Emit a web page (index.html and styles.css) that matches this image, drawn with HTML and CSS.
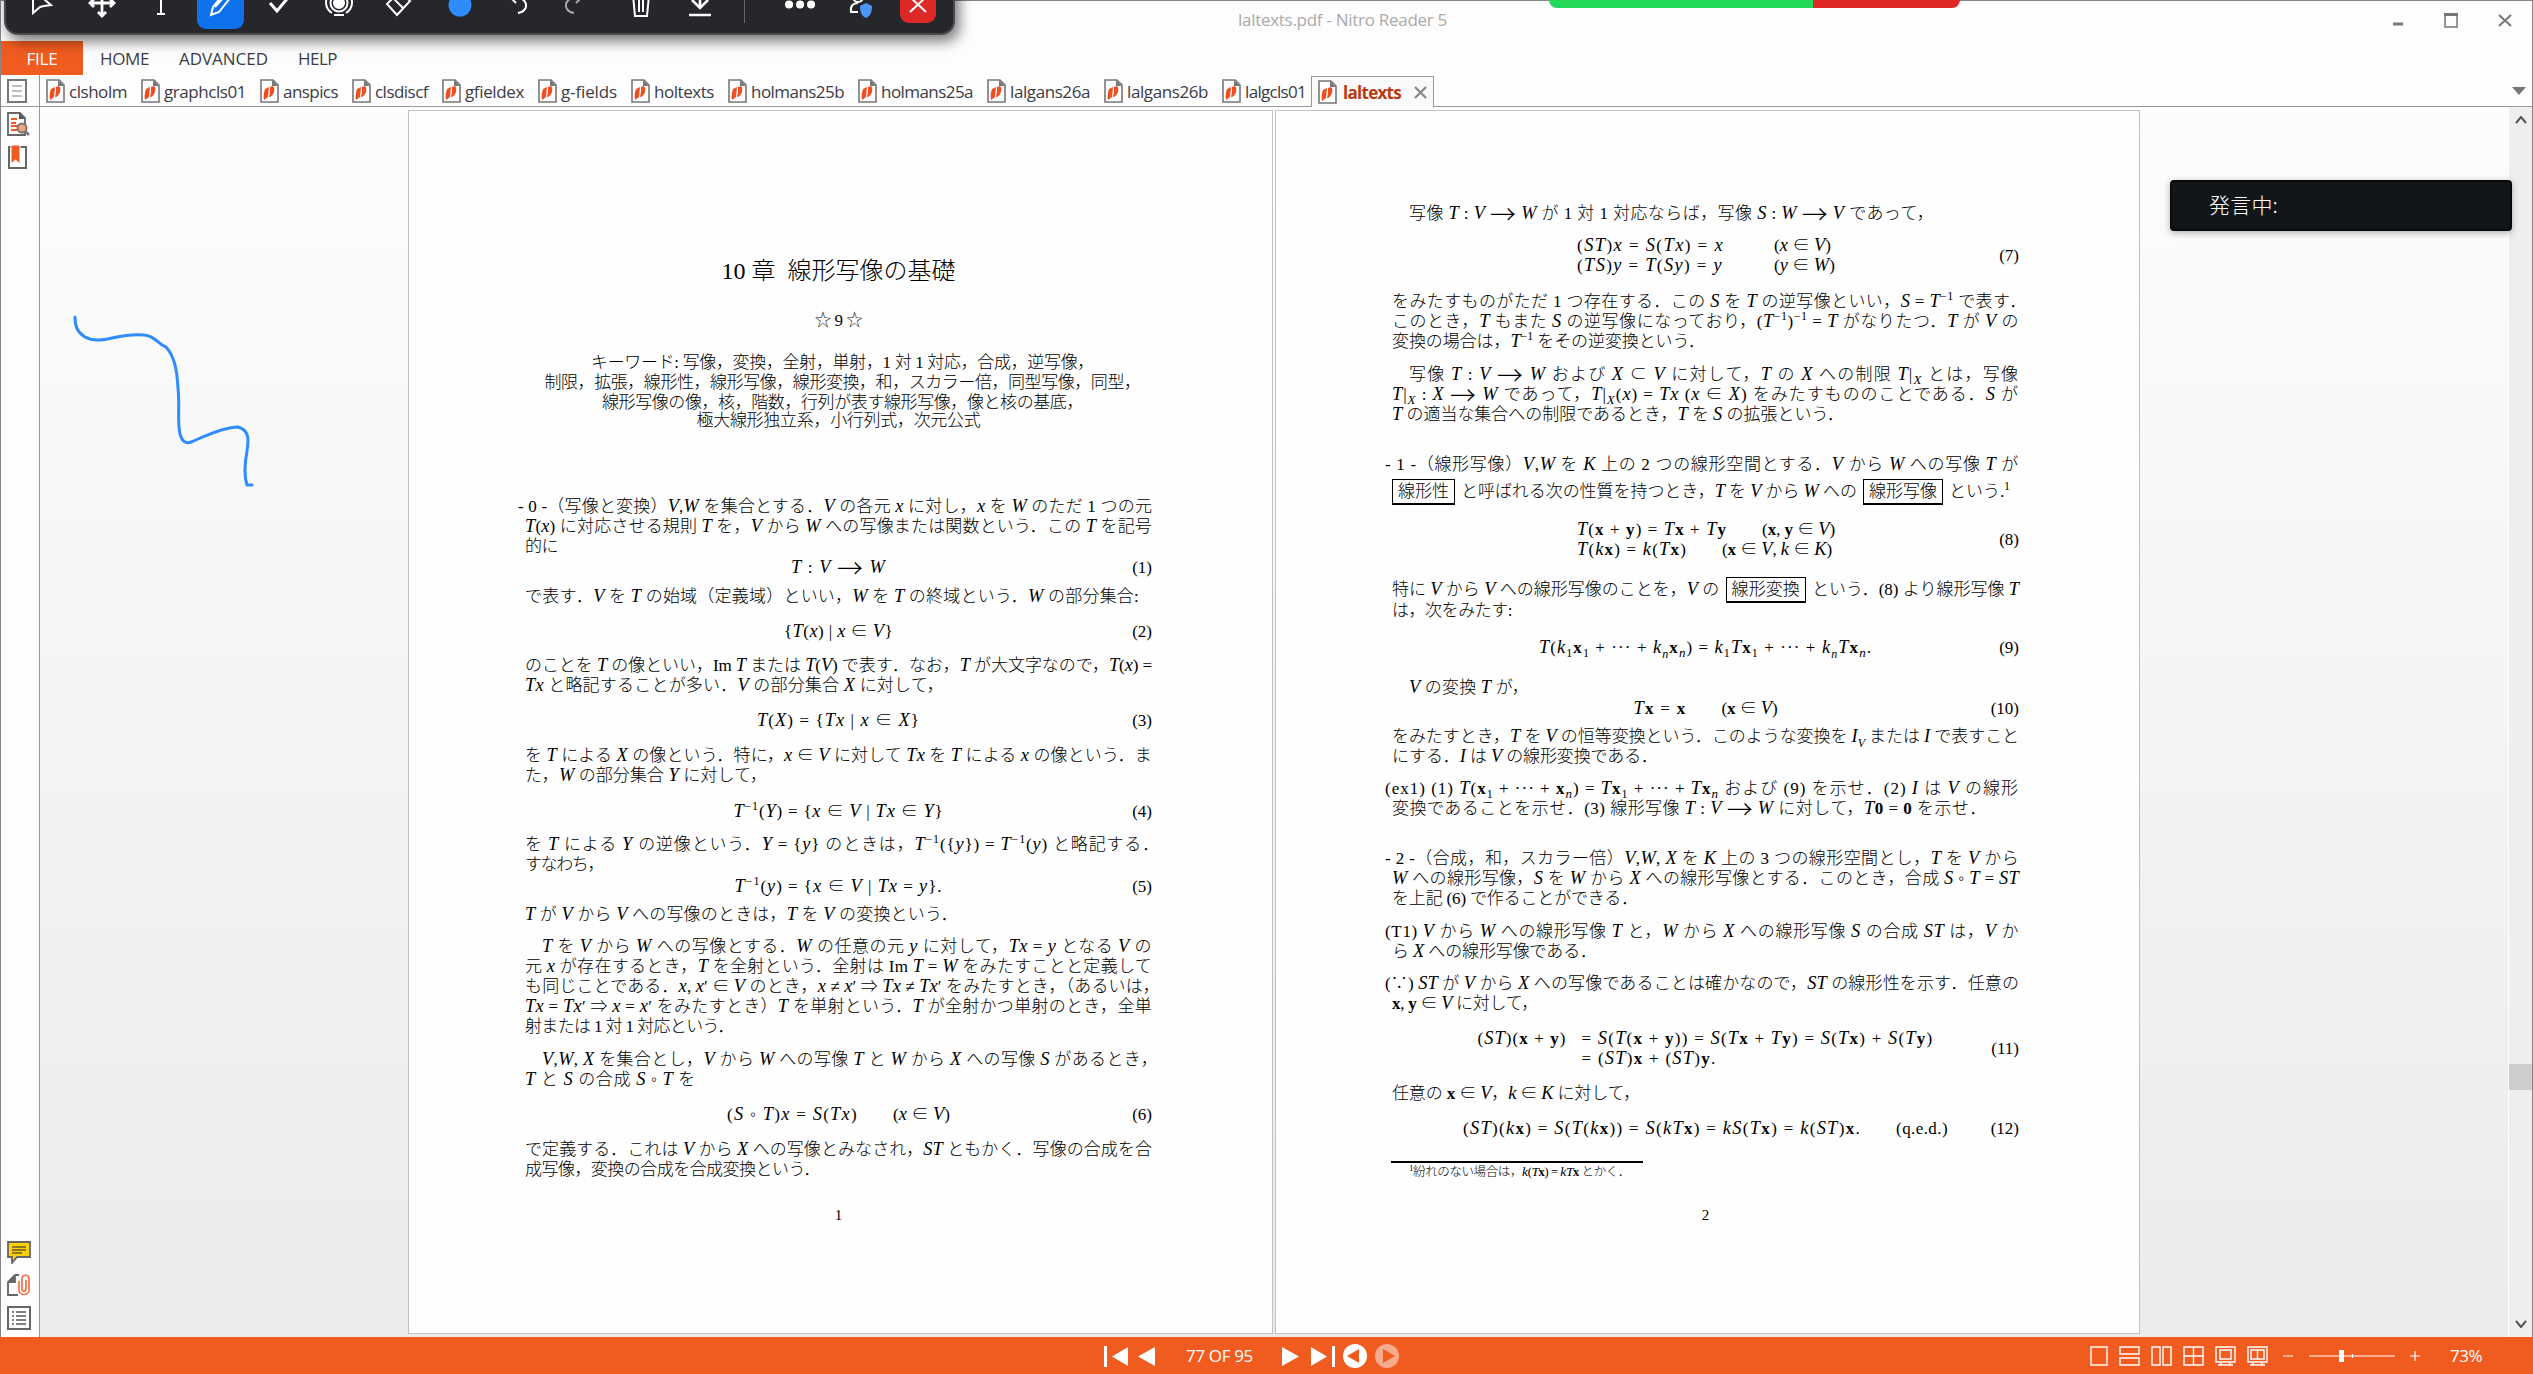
FILE: index.html
```html
<!DOCTYPE html>
<html lang="ja">
<head>
<meta charset="UTF-8">
<title>laltexts.pdf - Nitro Reader 5</title>
<link rel="stylesheet" href="styles.css">
</head>
<body>
<svg class="defs">
    <symbol id="pdf" viewBox="0 0 19 24">
        <path d="M1 1H13L18 6V23H1Z" fill="#fff" stroke="#777" stroke-width="1.6"/>
        <path d="M12 1V7H18Z" fill="#777"/>
        <path d="M5 10L9 8L8 18L4 21C3 17 4 13 5 10ZM10 8C14 6 15 9 14 13C13 16 11 18 9 18L10 13Z" fill="#f04e1f"/>
    </symbol>
</svg>

<div class="window">
    <div class="titlebar">
        <span class="title" data-w="209">laltexts.pdf - Nitro Reader 5</span>
        <div class="controls">
            <svg width="12" height="24"><path d="M1 16H11" stroke="#777" stroke-width="3"/></svg>
            <svg width="14" height="24"><path d="M1 6V19H13V6" fill="none" stroke="#777" stroke-width="1.5"/><path d="M0 6.500H14" stroke="#777" stroke-width="3"/></svg>
            <svg width="14" height="24"><path d="M1 7L13 18M13 7L1 18" stroke="#777" stroke-width="2"/></svg>
        </div>
    </div>

    <div class="menu">
        <div class="file"><span data-w="31">FILE</span></div>
        <span data-w="49">HOME</span>
        <span data-w="89">ADVANCED</span>
        <span data-w="39">HELP</span>
    </div>

    <div class="tabs">
        <div class="tab"><svg><use href="#pdf"/></svg><span data-w="58">clsholm</span></div>
        <div class="tab"><svg><use href="#pdf"/></svg><span data-w="82">graphcls01</span></div>
        <div class="tab"><svg><use href="#pdf"/></svg><span data-w="55">anspics</span></div>
        <div class="tab"><svg><use href="#pdf"/></svg><span data-w="53">clsdiscf</span></div>
        <div class="tab"><svg><use href="#pdf"/></svg><span data-w="59">gfieldex</span></div>
        <div class="tab"><svg><use href="#pdf"/></svg><span data-w="56">g-fields</span></div>
        <div class="tab"><svg><use href="#pdf"/></svg><span data-w="60">holtexts</span></div>
        <div class="tab"><svg><use href="#pdf"/></svg><span data-w="93">holmans25b</span></div>
        <div class="tab"><svg><use href="#pdf"/></svg><span data-w="92">holmans25a</span></div>
        <div class="tab"><svg><use href="#pdf"/></svg><span data-w="80">lalgans26a</span></div>
        <div class="tab"><svg><use href="#pdf"/></svg><span data-w="81">lalgans26b</span></div>
        <div class="tab"><svg><use href="#pdf"/></svg><span data-w="61">lalgcls01</span></div>
        <div class="tab active"><svg><use href="#pdf"/></svg><span data-w="58">laltexts</span>
            <svg class="close" viewBox="0 0 14 14"><path d="M1 1L13 13M13 1L1 13" stroke="#888" stroke-width="2.400"/></svg>
        </div>
        <div class="more"></div>
    </div>

    <div class="main">
        <div class="rail">
            <svg width="20" height="24"><rect x="1" y="1" width="18" height="22" fill="#fff" stroke="#777" stroke-width="2"/><path d="M5 7H15M5 12H15M5 17H15" stroke="#aaa" stroke-width="1.500"/></svg>
            <svg width="23" height="24"><path d="M1 1H13L18 6V23H1Z" fill="#fff" stroke="#666" stroke-width="1.800"/><path d="M12 1V7H18Z" fill="#555"/><path d="M4 7H10M4 11H9M4 14H12M4 18H10" stroke="#f05b20" stroke-width="1.800"/><circle cx="15" cy="16" r="4.500" fill="#f7a283" stroke="#777" stroke-width="2"/><path d="M18 19L22 23" stroke="#777" stroke-width="2.500"/></svg>
            <svg width="20" height="24"><rect x="2" y="2" width="17" height="21" fill="#fff" stroke="#666" stroke-width="2"/><path d="M4 0H13V19L8.500 15L4 19Z" fill="#f05b20" stroke="#fff"/></svg>
            <div class="spacer"></div>
            <svg width="24" height="23"><path d="M1 1H23V16H10L5 22V16H1Z" fill="#fcd008" stroke="#666" stroke-width="1.800"/><path d="M5 6H19M5 9H19M5 12H15" stroke="#665c20" stroke-width="1.300"/></svg>
            <svg width="24" height="24"><path d="M8 2L1 9V22H11M8 2V9H1M8 2H12" fill="none" stroke="#666" stroke-width="1.800"/><path d="M8 2V9H1Z" fill="#666"/><path d="M12 8V17C12 23 22 23 22 17V6C22 1 15 1 15 6V16C15 19 19 19 19 16V7" fill="none" stroke="#ee7447" stroke-width="1.700"/></svg>
            <svg width="24" height="24"><rect x="1" y="1" width="22" height="22" fill="#fff" stroke="#666" stroke-width="2"/><path d="M5 6H7M5 10H7M5 14H7M5 18H7M9 6H19M9 10H19M9 14H19M9 18H19" stroke="#555" stroke-width="1.500"/></svg>
        </div>

        <div class="canvas">
            <div class="page page1">
                <h1 data-w="234">10 章&ensp;線形写像の基礎</h1>
                <div class="stars m25" data-w="48">☆ 9 ☆</div>
                <div class="kw m22">
                    <p data-w="503">キーワード: 写像，変換，全射，単射，1 対 1 対応，合成，逆写像，</p>
                    <p data-w="596">制限，拡張，線形性，線形写像，線形変換，和，スカラー倍，同型写像，同型，</p>
                    <p data-w="481">線形写像の像，核，階数，行列が表す線形写像，像と核の基底，</p>
                    <p class="last" data-w="284">極大線形独立系，小行列式，次元公式</p>
                </div>
                <p class="out m66" data-w="634">- 0 -（写像と変換）<i>V</i>,<i>W</i> を集合とする．<i>V</i> の各元 <i>x</i> に対し，<i>x</i> を <i>W</i> のただ 1 つの元</p>
                <p data-w="627"><i>T</i>(<i>x</i>) に対応させる規則 <i>T</i> を，<i>V</i> から <i>W</i> への写像または関数という．この <i>T</i> を記号</p>
                <p data-w="33">的に</p>
                <div class="eq m1"><div><span data-w="95"><i>T</i> : <i>V</i> <span class="to">→</span> <i>W</i></span></div><em>(1)</em></div>
                <p class="m9" data-w="614">で表す．<i>V</i> を <i>T</i> の始域（定義域）といい，<i>W</i> を <i>T</i> の終域という．<i>W</i> の部分集合:</p>
                <div class="eq m15"><div><span data-w="109">{<i>T</i>(<i>x</i>) | <i>x</i> ∈ <i>V</i>}</span></div><em>(2)</em></div>
                <p class="m14" data-w="627">のことを <i>T</i> の像といい，Im <i>T</i> または <i>T</i>(<i>V</i>) で表す．なお，<i>T</i> が大文字なので，<i>T</i>(<i>x</i>) =</p>
                <p data-w="419"><i>Tx</i> と略記することが多い．<i>V</i> の部分集合 <i>X</i> に対して，</p>
                <div class="eq m15"><div><span data-w="163"><i>T</i>(<i>X</i>) = {<i>Tx</i> | <i>x</i> ∈ <i>X</i>}</span></div><em>(3)</em></div>
                <p class="m15" data-w="627">を <i>T</i> による <i>X</i> の像という．特に，<i>x</i> ∈ <i>V</i> に対して <i>Tx</i> を <i>T</i> による <i>x</i> の像という．ま</p>
                <p data-w="242">た，<i>W</i> の部分集合 <i>Y</i> に対して，</p>
                <div class="eq m16"><div><span data-w="210"><i>T</i><sup>−1</sup>(<i>Y</i>) = {<i>x</i> ∈ <i>V</i> | <i>Tx</i> ∈ <i>Y</i>}</span></div><em>(4)</em></div>
                <p class="m13" data-w="635">を <i>T</i> による <i>Y</i> の逆像という．<i>Y</i> = {<i>y</i>} のときは，<i>T</i><sup>−1</sup>({<i>y</i>}) = <i>T</i><sup>−1</sup>(<i>y</i>) と略記する．</p>
                <p data-w="78">すなわち，</p>
                <div class="eq m2"><div><span data-w="208"><i>T</i><sup>−1</sup>(<i>y</i>) = {<i>x</i> ∈ <i>V</i> | <i>Tx</i> = <i>y</i>}.</span></div><em>(5)</em></div>
                <p class="m8" data-w="433"><i>T</i> が <i>V</i> から <i>V</i> への写像のときは，<i>T</i> を <i>V</i> の変換という．</p>
                <p class="in m12" data-w="610"><i>T</i> を <i>V</i> から <i>W</i> への写像とする．<i>W</i> の任意の元 <i>y</i> に対して，<i>Tx</i> = <i>y</i> となる <i>V</i> の</p>
                <p data-w="627">元 <i>x</i> が存在するとき，<i>T</i> を全射という．全射は Im <i>T</i> = <i>W</i> をみたすことと定義して</p>
                <p data-w="635">も同じことである．<i>x</i>, <i>x</i>′ ∈ <i>V</i> のとき，<i>x</i> ≠ <i>x</i>′ ⇒ <i>Tx</i> ≠ <i>Tx</i>′ をみたすとき，（あるいは，</p>
                <p data-w="627"><i>Tx</i> = <i>Tx</i>′ ⇒ <i>x</i> = <i>x</i>′ をみたすとき）<i>T</i> を単射という．<i>T</i> が全射かつ単射のとき，全単</p>
                <p data-w="209">射または 1 対 1 対応という．</p>
                <p class="in m13" data-w="616"><i>V</i>,<i>W</i>, <i>X</i> を集合とし，<i>V</i> から <i>W</i> への写像 <i>T</i> と <i>W</i> から <i>X</i> への写像 <i>S</i> があるとき，</p>
                <p data-w="171"><i>T</i> と <i>S</i> の合成 <i>S</i> ◦ <i>T</i> を</p>
                <div class="eq m15"><div><span data-w="131">(<i>S</i> ◦ <i>T</i>)<i>x</i> = <i>S</i>(<i>Tx</i>)</span><span class="cond" data-w="57">(<i>x</i> ∈ <i>V</i>)</span></div><em>(6)</em></div>
                <p class="m15" data-w="627">で定義する．これは <i>V</i> から <i>X</i> への写像とみなされ，<i>ST</i> ともかく．写像の合成を合</p>
                <p data-w="295">成写像，変換の合成を合成変換という．</p>
                <div class="pageno m25">1</div>
            </div>

            <div class="page page2">
                <p class="in" data-w="525">写像 <i>T</i> : <i>V</i> <span class="to">→</span> <i>W</i> が 1 対 1 対応ならば，写像 <i>S</i> : <i>W</i> <span class="to">→</span> <i>V</i> であって，</p>
                <div class="eq m12">
                    <div class="rows seven">
                        <span data-w="147">(<i>ST</i>)<i>x</i> = <i>S</i>(<i>Tx</i>) = <i>x</i></span><span data-w="57">(<i>x</i> ∈ <i>V</i>)</span>
                        <span data-w="146">(<i>TS</i>)<i>y</i> = <i>T</i>(<i>Sy</i>) = <i>y</i></span><span data-w="61">(<i>y</i> ∈ <i>W</i>)</span>
                    </div><em>(7)</em>
                </div>
                <p class="m16" data-w="635">をみたすものがただ 1 つ存在する．この <i>S</i> を <i>T</i> の逆写像といい，<i>S</i> = <i>T</i><sup>−1</sup> で表す．</p>
                <p data-w="627">このとき，<i>T</i> もまた <i>S</i> の逆写像になっており，(<i>T</i><sup>−1</sup>)<sup>−1</sup> = <i>T</i> がなりたつ．<i>T</i> が <i>V</i> の</p>
                <p data-w="313">変換の場合は，<i>T</i><sup>−1</sup> をその逆変換という．</p>
                <p class="in m13" data-w="610">写像 <i>T</i> : <i>V</i> <span class="to">→</span> <i>W</i> および <i>X</i> ⊂ <i>V</i> に対して，<i>T</i> の <i>X</i> への制限 <i>T</i>|<sub><i>X</i></sub> とは，写像</p>
                <p data-w="627"><i>T</i>|<sub><i>X</i></sub> : <i>X</i> <span class="to">→</span> <i>W</i> であって，<i>T</i>|<sub><i>X</i></sub>(<i>x</i>) = <i>Tx</i> (<i>x</i> ∈ <i>X</i>) をみたすもののことである．<i>S</i> が</p>
                <p data-w="452"><i>T</i> の適当な集合への制限であるとき，<i>T</i> を <i>S</i> の拡張という．</p>
                <p class="out m30" data-w="634">- 1 -（線形写像）<i>V</i>,<i>W</i> を <i>K</i> 上の 2 つの線形空間とする．<i>V</i> から <i>W</i> への写像 <i>T</i> が</p>
                <p class="boxed m7" data-w="620"><span class="box">線形性</span> と呼ばれる次の性質を持つとき，<i>T</i> を <i>V</i> から <i>W</i> への <span class="box">線形写像</span> という.<sup>1</sup></p>
                <div class="eq m18">
                    <div class="stack">
                        <div><span data-w="150"><i>T</i>(<b>x</b> + <b>y</b>) = <i>T</i><b>x</b> + <i>T</i><b>y</b></span><span class="cond" data-w="73">(<b>x</b>, <b>y</b> ∈ <i>V</i>)</span></div>
                        <div><span data-w="110"><i>T</i>(<i>k</i><b>x</b>) = <i>k</i>(<i>T</i><b>x</b>)</span><span class="cond" data-w="110">(<b>x</b> ∈ <i>V</i>, <i>k</i> ∈ <i>K</i>)</span></div>
                    </div><em>(8)</em>
                </div>
                <p class="m20" data-w="627">特に <i>V</i> から <i>V</i> への線形写像のことを，<i>V</i> の <span class="box">線形変換</span> という．(8) より線形写像 <i>T</i></p>
                <p class="m1" data-w="120">は，次をみたす:</p>
                <div class="eq m17"><div><span data-w="333"><i>T</i>(<i>k</i><sub>1</sub><b>x</b><sub>1</sub> + ··· + <i>k<sub>n</sub></i><b>x</b><sub><i>n</i></sub>) = <i>k</i><sub>1</sub><i>T</i><b>x</b><sub>1</sub> + ··· + <i>k<sub>n</sub>T</i><b>x</b><sub><i>n</i></sub>.</span></div><em>(9)</em></div>
                <p class="in m20" data-w="120"><i>V</i> の変換 <i>T</i> が，</p>
                <div class="eq m1"><div><span data-w="53"><i>T</i><b>x</b> = <b>x</b></span><span class="cond" data-w="56">(<b>x</b> ∈ <i>V</i>)</span></div><em>(10)</em></div>
                <p class="m8" data-w="627">をみたすとき，<i>T</i> を <i>V</i> の恒等変換という．このような変換を <i>I<sub>V</sub></i> または <i>I</i> で表すこと</p>
                <p data-w="266">にする．<i>I</i> は <i>V</i> の線形変換である．</p>
                <p class="out m12" data-w="634">(ex1) (1) <i>T</i>(<b>x</b><sub>1</sub> + ··· + <b>x</b><sub><i>n</i></sub>) = <i>T</i><b>x</b><sub>1</sub> + ··· + <i>T</i><b>x</b><sub><i>n</i></sub> および (9) を示せ．(2) <i>I</i> は <i>V</i> の線形</p>
                <p data-w="595">変換であることを示せ．(3) 線形写像 <i>T</i> : <i>V</i> <span class="to">→</span> <i>W</i> に対して，<i>T</i><b>0</b> = <b>0</b> を示せ．</p>
                <p class="out m30" data-w="634">- 2 -（合成，和，スカラー倍）<i>V</i>,<i>W</i>, <i>X</i> を <i>K</i> 上の 3 つの線形空間とし，<i>T</i> を <i>V</i> から</p>
                <p data-w="627"><i>W</i> への線形写像，<i>S</i> を <i>W</i> から <i>X</i> への線形写像とする．このとき，合成 <i>S</i> ◦ <i>T</i> = <i>ST</i></p>
                <p data-w="246">を上記 (6) で作ることができる．</p>
                <p class="out m13" data-w="634">(T1) <i>V</i> から <i>W</i> への線形写像 <i>T</i> と，<i>W</i> から <i>X</i> への線形写像 <i>S</i> の合成 <i>ST</i> は，<i>V</i> か</p>
                <p data-w="205">ら <i>X</i> への線形写像である．</p>
                <p class="out m12" data-w="634">(∵) <i>ST</i> が <i>V</i> から <i>X</i> への写像であることは確かなので，<i>ST</i> の線形性を示す．任意の</p>
                <p data-w="146"><b>x</b>, <b>y</b> ∈ <i>V</i> に対して，</p>
                <div class="eq m15">
                    <div class="rows eleven">
                        <span data-w="89">(<i>ST</i>)(<b>x</b> + <b>y</b>)</span><span data-w="352">= <i>S</i>(<i>T</i>(<b>x</b> + <b>y</b>)) = <i>S</i>(<i>T</i><b>x</b> + <i>T</i><b>y</b>) = <i>S</i>(<i>T</i><b>x</b>) + <i>S</i>(<i>T</i><b>y</b>)</span>
                        <span></span><span data-w="135">= (<i>ST</i>)<b>x</b> + (<i>ST</i>)<b>y</b>.</span>
                    </div><em>(11)</em>
                </div>
                <p class="m15" data-w="248">任意の <b>x</b> ∈ <i>V</i>，<i>k</i> ∈ <i>K</i> に対して，</p>
                <div class="eq m15"><div><span data-w="398">(<i>ST</i>)(<i>k</i><b>x</b>) = <i>S</i>(<i>T</i>(<i>k</i><b>x</b>)) = <i>S</i>(<i>kT</i><b>x</b>) = <i>kS</i>(<i>T</i><b>x</b>) = <i>k</i>(<i>ST</i>)<b>x</b>.</span><span class="cond" data-w="52">(q.e.d.)</span></div><em>(12)</em></div>
                <div class="rule"></div>
                <p class="foot" data-w="221"><sup>1</sup>紛れのない場合は，<i>k</i>(<i>T</i><b>x</b>) = <i>kT</i><b>x</b> とかく．</p>
                <div class="pageno m25">2</div>
            </div>
        </div>

        <div class="scrollbar">
            <svg width="12" height="8"><path d="M1 7L6 1L11 7" fill="none" stroke="#555" stroke-width="2"/></svg>
            <div class="thumb"></div>
            <svg width="12" height="8"><path d="M1 1L6 7L11 1" fill="none" stroke="#555" stroke-width="2"/></svg>
        </div>
    </div>

    <div class="status">
        <div class="nav">
            <svg width="24" height="22"><path d="M0 1H3V22H0ZM24 2V21L8 11.500Z" fill="#fff"/></svg>
            <svg width="17" height="22"><path d="M17 2V21L0 11.500Z" fill="#fff"/></svg>
            <span class="count" data-w="67">77 OF 95</span>
            <svg width="17" height="22"><path d="M0 2V21L17 11.500Z" fill="#fff"/></svg>
            <svg width="24" height="22"><path d="M0 2V21L16 11.500ZM21 1H24V22H21Z" fill="#fff"/></svg>
            <svg width="24" height="24"><circle cx="12" cy="12" r="12" fill="#fff"/><path d="M16 5V19L4 12Z" fill="#f05b20"/></svg>
            <svg width="24" height="24"><circle cx="12" cy="12" r="12" fill="#f7ab8d"/><path d="M8 5V19L20 12Z" fill="#f05b20"/></svg>
        </div>
        <div class="views">
            <svg width="18" height="22"><rect x="1" y="2" width="16" height="18"/></svg>
            <svg width="21" height="22"><path d="M1 2H20V9H1ZM1 13H20V20H1Z"/></svg>
            <svg width="21" height="22"><path d="M1 2H9V20H1ZM12 2H20V20H12Z"/></svg>
            <svg width="21" height="22"><path d="M1 2H20V20H1ZM10.500 2V20M1 11H20"/></svg>
            <svg width="21" height="22"><path d="M1 2H20V17H1ZM5 5H16V14H5ZM6 17V20M15 17V20M3 20H18"/></svg>
            <svg width="21" height="22"><path d="M1 2H20V17H1ZM4 5H17V14H4ZM10.500 5V14M6 17V20M15 17V20M3 20H18"/></svg>
        </div>
        <svg class="zoombar" width="138" height="22"><path d="M0 11H10M26 11H112M127 11H137M132 6V16M69.500 9V13" stroke="#fff" stroke-width="1.200"/><rect x="56" y="5" width="5" height="12" fill="#fff"/></svg>
        <span class="percent" data-w="32">73%</span>
    </div>
</div>

<svg class="scribble" viewBox="0 0 220 200"><path d="M15 8C15 17 17 23 25 28C42 37 57 23 84 26C96 27 97 35 106 38C115 48 117 62 118 79C120 98 117 112 120 125Q123 136 131 133C143 128 163 118 178 118C189 121 189 130 187 142C184 158 185 170 187 176L192 176" fill="none" stroke="#2e8cff" stroke-width="3" stroke-linecap="round" stroke-linejoin="round"/></svg>

<div class="toolbar">
    <svg viewBox="0 0 30 30"><path d="M5 2V25L12 19L16 18L23 17Z"/></svg>
    <svg viewBox="0 0 30 30"><path d="M15 2V28M3 15H27M11 6L15 2L19 6M11 24L15 28L19 24M7 11L3 15L7 19M23 11L27 15L23 19" stroke-width="2.800"/></svg>
    <svg viewBox="0 0 30 30"><path d="M7 3H23M15 3V26M11 26H19"/></svg>
    <div class="pen"><svg viewBox="0 0 30 30"><path d="M6 27L8 19L20 4L26 9L14 24ZM10 19L19 9"/></svg></div>
    <svg viewBox="0 0 30 30"><path d="M5 15L12 23L26 6" stroke-width="3"/></svg>
    <svg viewBox="0 0 30 30"><circle cx="15" cy="15" r="5" fill="#fff"/><circle cx="15" cy="15" r="8.500"/><path d="M8 25C0 20 0 9 8 4M22 4C30 9 30 20 22 25M10 27H20"/></svg>
    <svg viewBox="0 0 30 30"><path d="M4 16L17 3L27 13L14 27ZM10 10L20 20"/></svg>
    <svg viewBox="0 0 30 30"><circle cx="19" cy="17" r="11.500" fill="#2e8cff" stroke="none"/></svg>
    <svg viewBox="0 0 30 30"><path d="M16 3L10 9L16 15M11 9C28 7 31 23 18 25"/></svg>
    <svg viewBox="0 0 30 30" class="dim"><path d="M17 3L23 9L17 15M22 9C5 7 2 23 15 25"/></svg>
    <svg viewBox="0 0 30 30"><path d="M12 7H34M15 7L17 28H29L31 7M21 12V24M25 12V24"/></svg>
    <svg viewBox="0 0 30 30"><path d="M23 0V19M15 12L23 20L31 12M12 27H34" stroke-width="2.600"/></svg>
    <div class="divider"></div>
    <svg viewBox="0 0 30 30"><path d="M7 16.500H7.100M18 16.500H18.100M29 16.500H29.100" stroke-width="8" stroke-linecap="round"/></svg>
    <svg viewBox="0 0 30 30"><circle cx="17" cy="9" r="5"/><path d="M17 24H10C9 18 12 15 17 15"/><path d="M25 15L31 18C31 25 29 28 25 30C21 28 19 25 19 18Z" fill="#4b97f8" stroke="none"/></svg>
    <div class="quit"><svg viewBox="0 0 30 30"><path d="M7 9L23 24M23 9L7 24"/></svg></div>
</div>

<div class="share"></div>
<div class="speaker"><span data-w="69">発言中:</span></div>

<script>
    // spread the letters of each line over its set width
    document.querySelectorAll('[data-w]').forEach(function (el) {
        var want = Number(el.dataset.w);
        var have = el.getBoundingClientRect().width;
        var count = el.textContent.length;
        el.style.letterSpacing = ((want - have) / count).toFixed(3) + 'px';
    });
</script>
</body>
</html>
```
FILE: styles.css
```css
* {
    box-sizing: border-box;
}

body {
    margin: 0;
    width: 2533px;
    height: 1374px;
    overflow: hidden;
    position: relative;
    font-family: "Open Sans", "Noto Sans CJK JP", sans-serif;
    font-size: 17px;
    color: #3c3c46;
}

[data-w] {
    display: block;
    width: max-content;
    white-space: nowrap;
}

svg {
    flex: none;
    display: block;
}

.defs {
    position: absolute;
    width: 0;
    height: 0;
}

.window {
    height: 1374px;
    display: flex;
    flex-direction: column;
    background: #fdfdfd;
    border: 1px solid #858585;
    border-bottom: 0;
}

.titlebar {
    height: 40px;
    padding: 0 20px 3px 1237px;
    display: flex;
    align-items: center;
    justify-content: space-between;
    color: #aaa;
}

.controls {
    display: flex;
    gap: 40px;
}

.menu {
    height: 34px;
    display: flex;
    align-items: center;
    gap: 30px;
}

.menu .file {
    width: 82px;
    height: 34px;
    margin-right: -13px;
    display: flex;
    align-items: center;
    justify-content: center;
    background: #f05b20;
    color: #fff;
}

/* document tabs */
.tabs {
    height: 32px;
    padding: 1px 6px 0 45px;
    display: flex;
    border-bottom: 1px solid #999;
}

.tab {
    height: 30px;
    display: flex;
    align-items: center;
    gap: 4px;
    margin-right: 14px;
}

.tab > svg {
    width: 19px;
    height: 24px;
}

.tab.active {
    width: 123px;
    margin: 0 0 0 -9px;
    padding-left: 6px;
    border: 1px solid #999;
    border-bottom: 0;
    height: 31px;
    gap: 6px;
    background: #f9f9f9;
    color: #b83a10;
    font-weight: bold;
}

.tab .close {
    width: 13px;
    height: 13px;
    margin-left: 7px;
}

.more {
    margin: 11px 0 0 auto;
    border: 7px solid transparent;
    border-top: 8px solid #777;
    border-bottom: 0;
    height: 8px;
}

.main {
    flex: 1;
    display: flex;
    min-height: 0;
}

.rail {
    width: 39px;
    padding: 4px 0 7px 6px;
    display: flex;
    flex-direction: column;
    gap: 9px;
    border-right: 1px solid #999;
    margin-top: -32px;
}

.rail .spacer {
    flex: 1;
}

.canvas {
    flex: 1;
    padding: 3px 0 3px 368px;
    display: flex;
    gap: 2px;
    background: linear-gradient(#fdfdfd, #ebebeb);
}

.scrollbar {
    width: 24px;
    padding: 9px 0;
    display: flex;
    flex-direction: column;
    align-items: center;
    background: #eee;
    border-left: 1px solid #fff;
}

.scrollbar .thumb {
    width: 100%;
    height: 26px;
    margin: 940px 0 auto;
    background: #cdcdcd;
}

/* pages */
.page {
    width: 865px;
    height: 1224px;
    background: #fefefe;
    border: 1px solid #c2c2c2;
    font-family: "Liberation Serif", "Noto Sans CJK JP", serif;
    font-size: 17px;
    line-height: 20px;
    color: #000;
    font-weight: 300;
}

.page1 {
    padding: 145px 120px 0 116px;
}

.page2 {
    padding: 93px 120px 0 116px;
}

.page p {
    margin-top: 0;
    margin-bottom: 0;
    height: 20px;
}

.page h1 {
    margin: 0 auto;
    height: 30px;
    line-height: 30px;
    font-size: 24px;
    font-weight: 300;
}

.page i {
    font-size: 1.08em;
    line-height: 0;
}

.page b {
    font-weight: bold;
}

.page sup,
.page sub {
    font-size: 12px;
    line-height: 0;
}

.page .to {
    font-family: "Noto Sans CJK JP", sans-serif;
    font-size: 26px;
    line-height: 0;
    vertical-align: -5px;
}

.stars {
    margin-left: auto;
    margin-right: auto;
}

.kw {
    display: flex;
    flex-direction: column;
    align-items: center;
}

.kw p {
    margin-right: -8px;
}

.kw p.last {
    margin: -2px 0 0;
}

.page .out {
    margin-left: -7px;
}

.page .in {
    margin-left: 17px;
}

.page .boxed {
    margin-left: -2px;
}

.eq {
    display: grid;
    grid-template-columns: 50px 1fr 50px;
    align-items: center;
}

.eq > div {
    grid-column: 2;
    display: flex;
    justify-content: center;
}

.eq > em {
    font-style: normal;
    text-align: right;
}

.eq .cond {
    margin-left: 35px;
}

.eq .rows {
    display: grid;
    justify-content: center;
}

.eq .seven {
    grid-template-columns: 197px 60px;
}

.eq .eleven {
    grid-template-columns: 104px 352px;
}

.eq .stack {
    flex-direction: column;
    width: 257px;
    justify-self: center;
}

.stack > div {
    display: flex;
}

.box {
    display: inline-block;
    height: 26px;
    line-height: 24px;
    margin: -3px 2px;
    padding: 0 5px;
    border: 1px solid #000;
    border-bottom-width: 2px;
}

.rule {
    width: 252px;
    height: 2px;
    margin: 22px 0 1px -1px;
    background: #000;
}

.page .foot {
    margin-left: 17px;
    height: 16px;
    line-height: 16px;
    font-size: 12.5px;
}

.foot sup {
    font-size: 9px;
}

.pageno {
    text-align: center;
    font-size: 15px;
}

.page .m1 { margin-top: 1px; }
.page .m2 { margin-top: 2px; }
.page .m7 { margin-top: 7px; }
.page .m8 { margin-top: 8px; }
.page .m9 { margin-top: 9px; }
.page .m12 { margin-top: 12px; }
.page .m13 { margin-top: 13px; }
.page .m14 { margin-top: 14px; }
.page .m15 { margin-top: 15px; }
.page .m16 { margin-top: 16px; }
.page .m17 { margin-top: 17px; }
.page .m18 { margin-top: 18px; }
.page .m20 { margin-top: 20px; }
.page .m22 { margin-top: 22px; }
.page .m25 { margin-top: 25px; }
.page .m30 { margin-top: 30px; }
.page .m66 { margin-top: 66px; }

/* status bar */
.status {
    height: 37px;
    display: flex;
    align-items: center;
    background: #f05b20;
    margin: 0 -1px;
    padding: 0 51px 0 1104px;
    color: #fff;
}

.nav {
    display: flex;
    align-items: center;
    gap: 8px;
}

.nav svg:nth-child(2) {
    margin-left: 2px;
}

.count {
    margin: 0 21px 0 23px;
}

.nav svg:nth-child(5) {
    margin-left: 4px;
}

.views {
    margin-left: auto;
    display: flex;
    gap: 11px;
}

.views svg {
    fill: none;
    stroke: #fff;
    stroke-width: 1.4;
}

.zoombar {
    margin-left: 15px;
}

.percent {
    margin-left: 29px;
}

/* overlays on top of the reader */
.toolbar {
    position: absolute;
    left: 4px;
    top: -30px;
    width: 951px;
    height: 65px;
    padding: 0 17px 0 22px;
    display: flex;
    align-items: center;
    justify-content: space-between;
    background: #25272b;
    border: 2px solid #4a4b4e;
    border-radius: 14px;
    box-shadow: 4px 6px 14px rgba(0, 0, 0, 0.55);
}

.toolbar svg {
    width: 30px;
    height: 30px;
    overflow: visible;
    fill: none;
    stroke: #fff;
    stroke-width: 2;
}

.toolbar .dim {
    opacity: 0.6;
}

.toolbar .pen {
    width: 47px;
    height: 52px;
    padding: 11px 8px;
    margin: 0 -8px;
    background: #0e72ed;
    border-radius: 9px;
}

.toolbar .divider {
    width: 1px;
    height: 40px;
    margin: 0 8px;
    background: #66676a;
}

.toolbar .quit {
    width: 36px;
    height: 40px;
    padding: 5px 3px;
    background: #de2828;
    border-radius: 9px;
}

.share {
    position: absolute;
    left: 1549px;
    top: 0;
    width: 411px;
    height: 8px;
    border-radius: 0 0 8px 8px;
    background: linear-gradient(90deg, #23d959 264px, #e02828 264px);
}

.speaker {
    position: absolute;
    left: 2170px;
    top: 180px;
    width: 342px;
    height: 51px;
    padding: 0 0 3px 37px;
    display: flex;
    align-items: center;
    background: #131619;
    border: 2px solid #0a0a0a;
    border-radius: 4px;
    box-shadow: 0 2px 7px rgba(0, 0, 0, 0.3);
    color: #fff;
    font-family: "Noto Sans CJK JP", sans-serif;
    font-weight: 300;
    font-size: 21px;
}

.scribble {
    position: absolute;
    left: 60px;
    top: 309px;
    width: 220px;
    height: 200px;
}
```
